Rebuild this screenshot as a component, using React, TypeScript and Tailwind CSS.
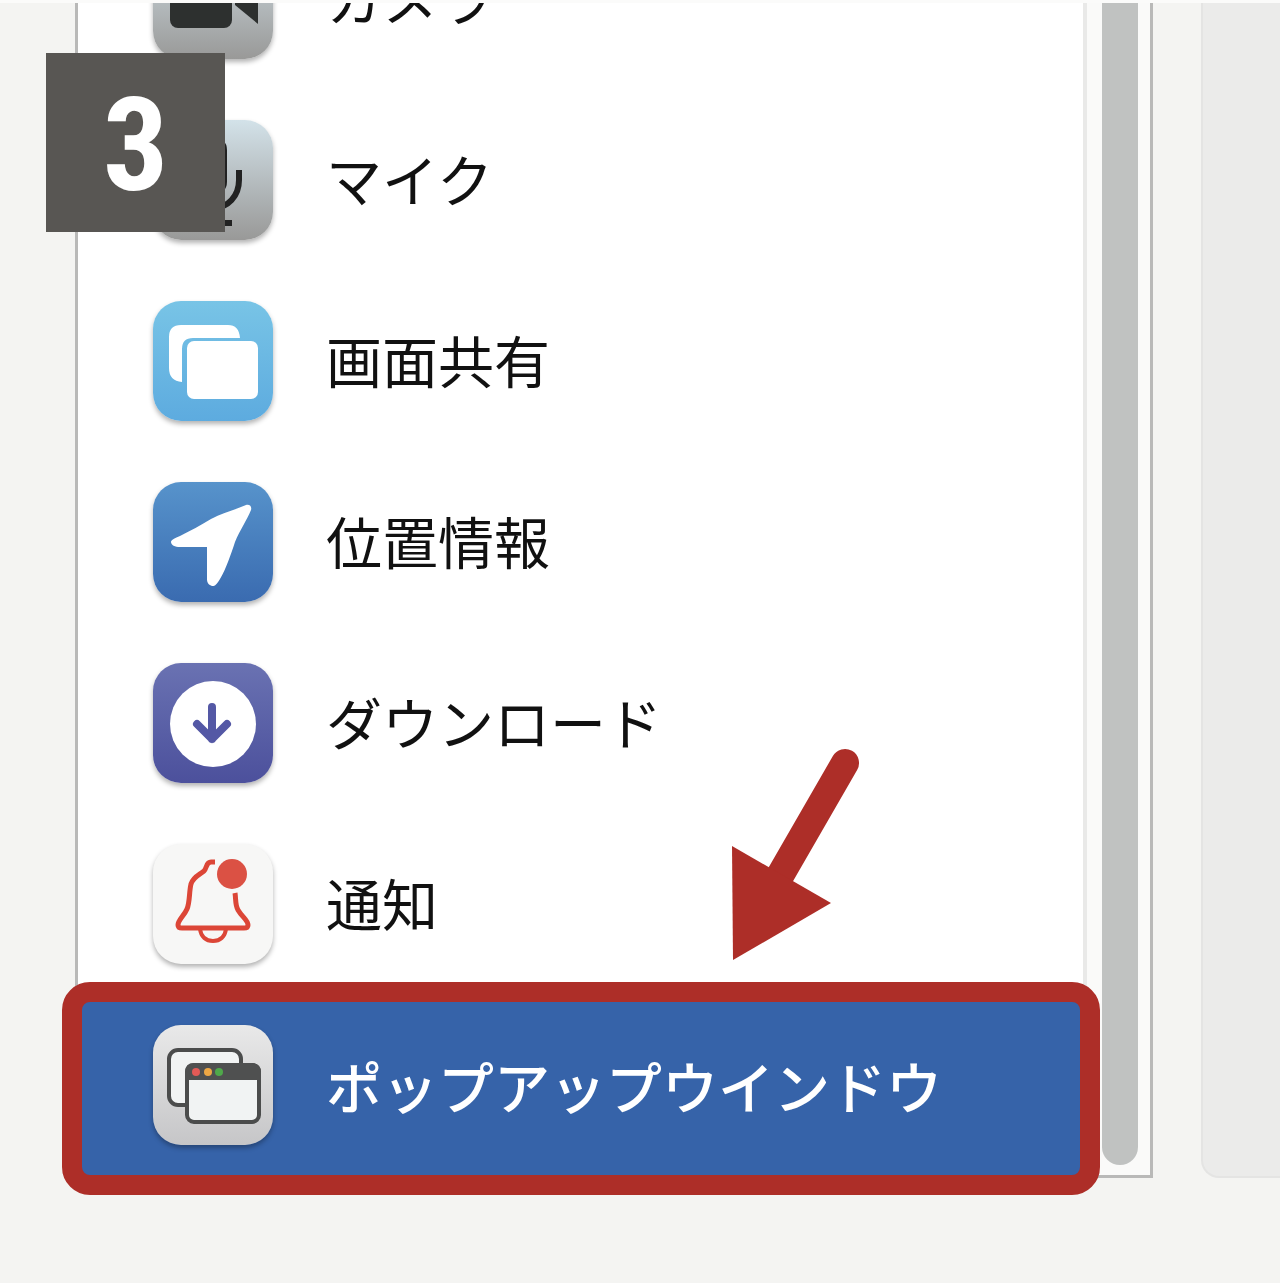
import type { ReactNode } from "react";

type Item = { label: string; icon: ReactNode; tile: string };

function Glyph({ children }: { children: ReactNode }) {
  return (
    <svg viewBox="0 0 120 120" className="size-full" fill="none" aria-hidden="true">
      {children}
    </svg>
  );
}

const items: Item[] = [
  {
    label: "カメラ",
    tile: "bg-linear-to-b from-[#d3e2e9] to-[#999998]",
    icon: (
      <Glyph>
        <rect x="17" y="31" width="62" height="58" rx="8" fill="#2d302f" />
        <path d="M82 60 105 36V85L82 66Z" fill="#2d302f" />
      </Glyph>
    ),
  },
  {
    label: "マイク",
    tile: "bg-linear-to-b from-[#d3e2e9] to-[#999998]",
    icon: (
      <Glyph>
        <rect x="46" y="16" width="28" height="60" rx="14" fill="#222" />
        <path d="M34 50V60C34 76 45 88 60 88S86 76 86 60V50M60 88V103M41 103H79" stroke="#222" strokeWidth="6" />
      </Glyph>
    ),
  },
  {
    label: "画面共有",
    tile: "bg-linear-to-b from-[#78c4e6] to-[#5dabdf]",
    icon: (
      <Glyph>
        <path d="M28 24H75Q86 24 87 37H40Q29 37 29 48V81Q16 80 16 67V36Q16 24 28 24Z" fill="#fff" />
        <rect x="34" y="40" width="71" height="58" rx="7" fill="#fff" />
      </Glyph>
    ),
  },
  {
    label: "位置情報",
    tile: "bg-linear-to-b from-[#5793cb] to-[#3a6bb0]",
    icon: (
      <Glyph>
        <path
          d="M93 23C97 22 99 25 98 28C94 38 87 48 82 60C78 72 73 87 67 97C63 104 61 104 59 104C56 103 54 101 54 97V65H27C22 65 18 63 18 60C18 58 22 56 27 54C37 49 48 43 58 37C69 31 82 28 93 23Z"
          fill="#fff"
        />
      </Glyph>
    ),
  },
  {
    label: "ダウンロード",
    tile: "bg-linear-to-b from-[#6a72b2] to-[#4c509c]",
    icon: (
      <Glyph>
        <circle cx="60" cy="61" r="43" fill="#fff" />
        <path d="M59 44V76M44 61 59 76 74 61" stroke="#5458a5" strokeWidth="8" strokeLinecap="round" strokeLinejoin="round" />
      </Glyph>
    ),
  },
  {
    label: "通知",
    tile: "bg-[#f7f7f6]",
    icon: (
      <Glyph>
        <path
          d="M62 18H58C53 18 54 24 51 27C46 31 40 33 38 40C36 48 37 58 34 65C31 72 25 76 25 81Q25 84 29 84H91Q95 84 95 81C95 76 89 73 85 66C82 61 83 55 82 49"
          stroke="#dc4637"
          strokeWidth="5"
        />
        <path d="M47 85C48 93 53 97 60 97S72 93 73 85" stroke="#dc4637" strokeWidth="4" />
        <circle cx="79" cy="30" r="15" fill="#db5144" />
      </Glyph>
    ),
  },
  {
    label: "ポップアップウインドウ",
    tile: "bg-linear-to-b from-[#e9e9e9] to-[#c6c6c8]",
    icon: (
      <Glyph>
        <rect x="16" y="25" width="72" height="55" rx="9" fill="#f1f3f3" stroke="#4b4c4c" strokeWidth="4" />
        <rect x="34" y="40" width="72" height="57" rx="7" fill="#f1f3f3" stroke="#4b4c4c" strokeWidth="4" />
        <path d="M32 55V47Q32 38 41 38H99Q108 38 108 47V55Z" fill="#4f5050" />
        <circle cx="43" cy="47" r="4" fill="#e25a56" />
        <circle cx="55" cy="47" r="4" fill="#eda744" />
        <circle cx="66" cy="47" r="4" fill="#4fa84a" />
      </Glyph>
    ),
  },
];

function Pointer() {
  return (
    <svg viewBox="0 0 128 212" className="pointer-events-none absolute -top-[246px] left-[654px] z-10 w-32" aria-hidden="true">
      <path d="M113 15 49 126" stroke="#ad2e28" strokeWidth="28" strokeLinecap="round" />
      <path d="M0 98 99 155 1 212Z" fill="#ad2e28" />
    </svg>
  );
}

function Row({ item, selected }: { item: Item; selected: boolean }) {
  return (
    <li className="relative">
      <button
        type="button"
        className={
          selected
            ? "flex h-[181px] w-full items-center gap-[53px] bg-[#3663a9] pl-[75px] text-left text-[56px] font-medium text-white"
            : "flex h-[181px] w-full items-center gap-[53px] pl-[75px] text-left text-[56px] text-[#111]"
        }
      >
        <span
          className={`block size-[120px] shrink-0 overflow-hidden rounded-[28px] shadow-[0_3px_5px_rgba(0,0,0,0.3)] ${item.tile}`}
        >
          {item.icon}
        </span>
        <span className={selected ? "whitespace-nowrap leading-none" : "pb-1 whitespace-nowrap leading-none"}>
          {item.label}
        </span>
      </button>
      {selected && (
        <>
          <div className="pointer-events-none absolute -top-3 -right-[17px] -bottom-5 -left-4 z-10 rounded-[28px] border-20 border-[#ad2e28]" />
          <Pointer />
        </>
      )}
    </li>
  );
}

export default function App() {
  return (
    <main className="relative min-h-screen overflow-hidden bg-[#f4f4f2] pb-[105px] font-['Noto_Sans_CJK_JP',sans-serif]">
      <div className="absolute inset-x-0 top-0 z-20 h-[3px] bg-[#fbfbfa]" />
      <div className="-mt-[92px] flex gap-12 pl-[75px]">
        <section className="flex min-w-0 flex-1 border-3 border-t-0 border-[#b9b9b8] bg-white">
          <ul className="min-w-0 flex-1">
            {items.map((item, i) => (
              <Row key={item.label} item={item} selected={i === items.length - 1} />
            ))}
          </ul>
          <div className="flex w-[67px] border-l-4 border-[#e9e9e8] bg-[#fafaf9] pr-3 pb-[10px] pl-[15px]">
            <div className="flex-1 rounded-b-full bg-[#c0c2c1]" />
          </div>
        </section>
        <aside className="w-[79px] rounded-bl-[18px] border-b-2 border-l-2 border-[#e4e4e3] bg-[#ebebea]" />
      </div>
      <div className="absolute top-[53px] left-[46px] z-10 flex size-[179px] items-center justify-center bg-[#585653] pt-1.5 font-['Liberation_Sans_Narrow','Roboto_Condensed',Roboto,sans-serif] text-[130px] leading-none font-bold text-white">
        3
      </div>
    </main>
  );
}
